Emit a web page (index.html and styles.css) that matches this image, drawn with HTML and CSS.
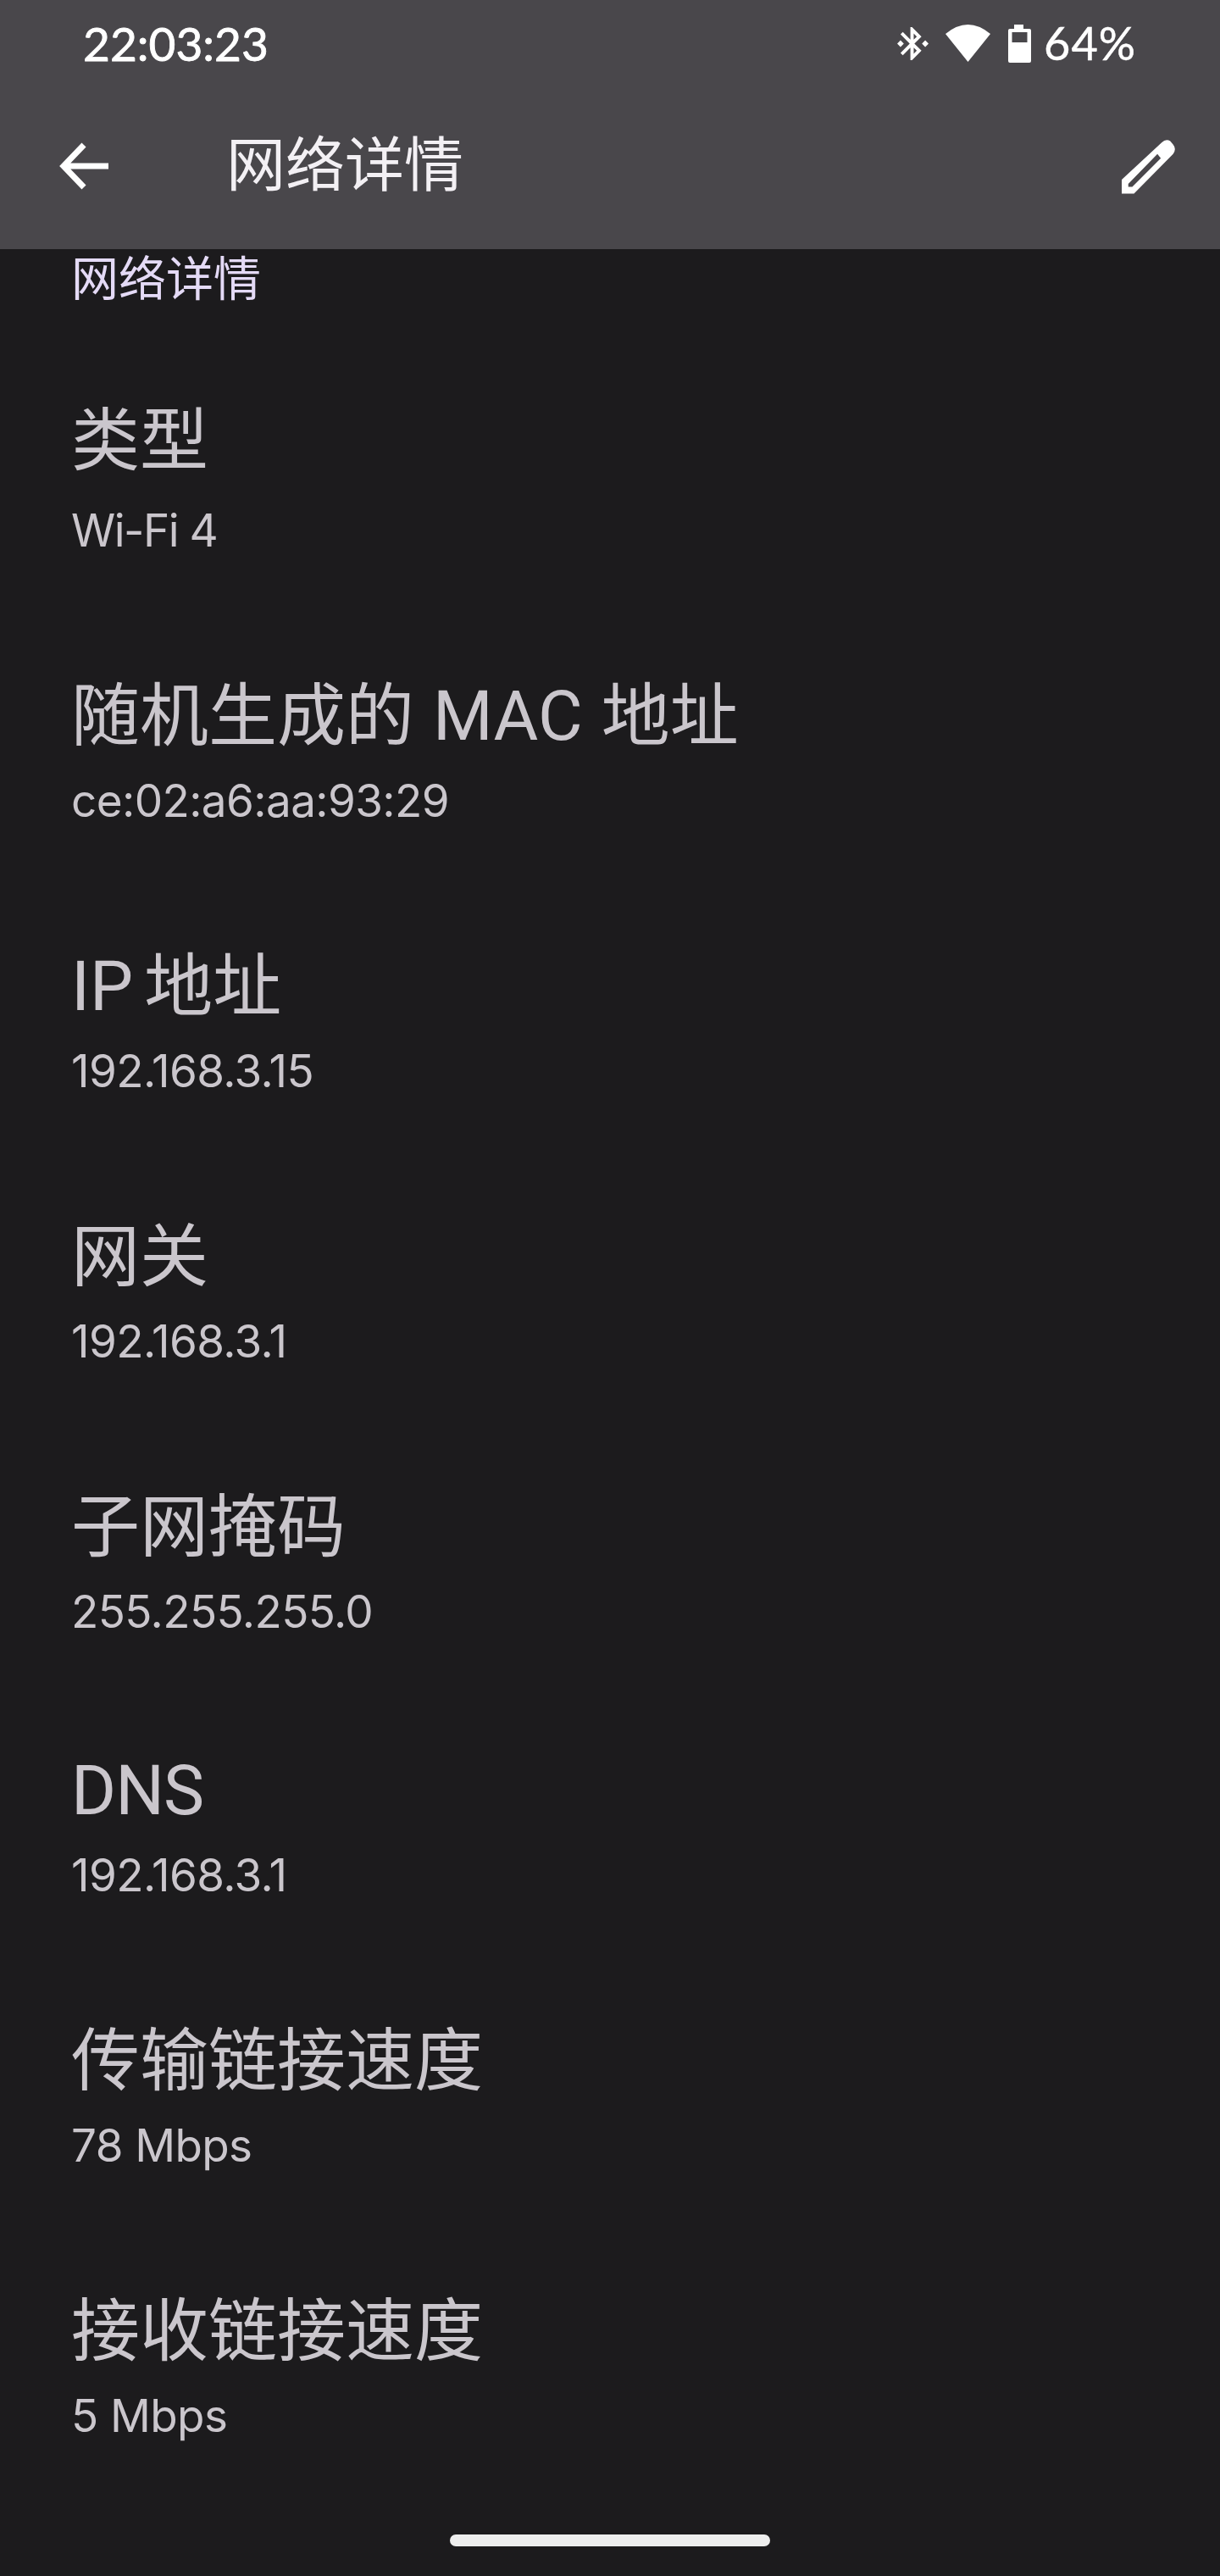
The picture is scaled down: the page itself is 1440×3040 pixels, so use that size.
FILE: index.html
```html
<!DOCTYPE html>
<html lang="zh-CN">
<head>
    <meta charset="UTF-8">
    <title>网络详情</title>
    <link rel="stylesheet" href="styles.css">
</head>
<body>
    <header class="top-bar">
        <div class="status-bar">
            <span class="clock">22:03:23</span>
            <div class="status-icons">
                <svg class="icon-bt" viewBox="3 2 19 20"><path d="M7 12l-2-2-2 2 2 2 2-2zm10.71-4.29L12 2h-1v7.59L6.41 5 5 6.41 10.59 12 5 17.59 6.41 19 11 14.41V22h1l5.71-5.71-4.3-4.29 4.3-4.29zM13 5.83l1.88 1.88L13 9.59V5.83zm1.88 10.46L13 18.17v-3.76l1.88 1.88zM20 10l-2 2 2 2 2-2-2-2z"/></svg>
                <svg class="icon-wifi" viewBox="0 0 53 44"><path d="M0 11Q26.500 -11 53 11L26.500 44Z"/></svg>
                <svg class="icon-battery" viewBox="0 0 27 45"><path fill-rule="evenodd" d="M7 0H18V5H25Q27 5 27 7V43Q27 45 25 45H2Q0 45 0 43V7Q0 5 2 5H7ZM4.500 9V21H22.500V9Z"/></svg>
                <span class="battery-text">64%</span>
            </div>
        </div>
        <div class="toolbar">
            <svg class="icon-back" viewBox="0 0 58 56"><path d="M29 3L5 28L29 53M5 28H58" fill="none" stroke="#fff" stroke-width="7"/></svg>
            <h1 class="page-title">网络详情</h1>
            <svg class="icon-edit" viewBox="975 490 190 195"><path fill-rule="evenodd" d="M975 635L1115 505Q1130 490 1145 500L1155 512Q1168 528 1155 545L1018 684H975ZM998 650V660H1012L1112 560L1100 545Z"/></svg>
        </div>
    </header>
    <main class="details">
        <div class="section-title">网络详情</div>
        <div class="row row-first">
            <div class="row-label">类型</div>
            <div class="row-value">Wi-Fi 4</div>
        </div>
        <div class="row">
            <div class="row-label">随机生成的 MAC 地址</div>
            <div class="row-value">ce:02:a6:aa:93:29</div>
        </div>
        <div class="row row-ip">
            <div class="row-label">IP 地址</div>
            <div class="row-value">192.168.3.15</div>
        </div>
        <div class="row">
            <div class="row-label">网关</div>
            <div class="row-value">192.168.3.1</div>
        </div>
        <div class="row">
            <div class="row-label">子网掩码</div>
            <div class="row-value">255.255.255.0</div>
        </div>
        <div class="row row-latin">
            <div class="row-label">DNS</div>
            <div class="row-value">192.168.3.1</div>
        </div>
        <div class="row">
            <div class="row-label">传输链接速度</div>
            <div class="row-value">78 Mbps</div>
        </div>
        <div class="row">
            <div class="row-label">接收链接速度</div>
            <div class="row-value">5 Mbps</div>
        </div>
    </main>
    <div class="home-bar"></div>
</body>
</html>
```

FILE: styles.css
```css
html, body {
    margin: 0;
    padding: 0;
    background: #1c1b1d;
    width: 1440px;
    height: 3040px;
    overflow: hidden;
}
body {
    display: flex;
    flex-direction: column;
    font-family: "Roboto", "Noto Sans CJK SC", sans-serif;
}
svg {
    display: block;
    fill: #fff;
    flex: none;
}
.top-bar {
    height: 294px;
    background: #49474b;
    color: #fff;
    flex: none;
}
.status-bar {
    display: flex;
    align-items: center;
    justify-content: space-between;
    height: 50px;
    padding: 26px 99px 0 98px;
}
.clock {
    font-family: "Lato", sans-serif;
    font-size: 55px;
    line-height: 50px;
    -webkit-text-stroke: 0.8px #fff;
}
.status-icons {
    display: flex;
    align-items: center;
}
.icon-bt {
    width: 37px;
    height: 45px;
    margin-right: 20px;
}
.icon-wifi {
    width: 53px;
    height: 44px;
    margin-right: 21px;
}
.icon-battery {
    width: 27px;
    height: 45px;
    margin-right: 15px;
}
.battery-text {
    font-family: "Lato", sans-serif;
    font-size: 54px;
    line-height: 50px;
    letter-spacing: 1px;
    -webkit-text-stroke: 0.5px #fff;
}
.toolbar {
    display: flex;
    align-items: center;
    height: 78px;
    padding: 78px 52px 0 70px;
}
.icon-back {
    width: 58px;
    height: 56px;
    margin-top: 6px;
}
.page-title {
    flex: 1;
    margin: 6px 0 0 139px;
    font-size: 70px;
    font-weight: 400;
    line-height: 78px;
    color: #f3f0f4;
}
.icon-edit {
    width: 64px;
    height: 66px;
    margin-top: 6px;
}
.details {
    flex: 1;
    padding: 0 85px 0 84px;
    overflow: hidden;
}
.section-title {
    padding-top: 4px;
    font-size: 56px;
    line-height: 64px;
    color: #e4daf6;
}
.row {
    padding: 115px 0 25px;
    color: #cac6cc;
}
.row-first {
    padding-top: 109px;
}
.row-latin {
    padding-top: 107px;
}
.row-label {
    font-size: 81px;
    line-height: 100px;
    word-spacing: 2px;
}
.row-ip .row-label {
    word-spacing: -7px;
}
.row-latin .row-label {
    letter-spacing: -1px;
}
.row-value {
    margin-top: 19px;
    font-family: "Inter", sans-serif;
    font-size: 53px;
    letter-spacing: -0.6px;
    line-height: 60px;
}
.row-first .row-value {
    margin-top: 25px;
    letter-spacing: -1.5px;
}
.home-bar {
    position: absolute;
    left: 531px;
    top: 2991px;
    width: 378px;
    height: 14px;
    border-radius: 7px;
    background: #eeeeee;
}
```
